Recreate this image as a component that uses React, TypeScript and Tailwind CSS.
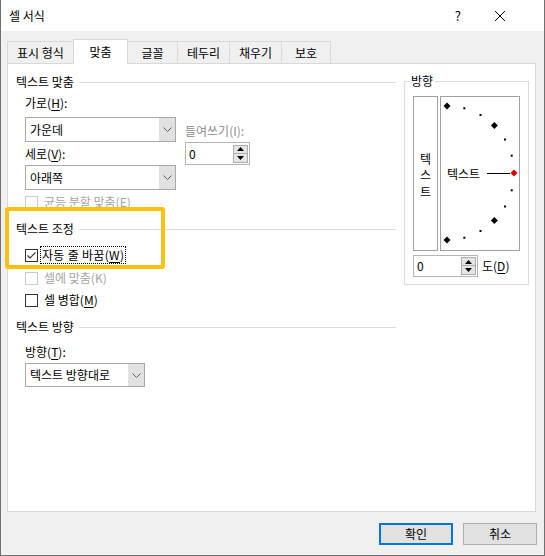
import type { ReactNode } from 'react';

function Mn({ children }: { children: ReactNode }) {
    return <span className="underline underline-offset-[2px]">{children}</span>;
}

function SectionHeader({ title }: { title: string }) {
    return (
        <div className="flex h-[16px] items-center leading-[16px]">
            <span>{title}</span>
            <div className="ml-[5px] h-px flex-1 bg-[#dcdcdc]" />
        </div>
    );
}

function CheckBox({ checked = false, disabled = false }: { checked?: boolean; disabled?: boolean }) {
    return (
        <span
            className={`flex h-[13px] w-[13px] shrink-0 items-center justify-center border bg-white ${
                disabled ? 'border-[#cccccc]' : 'border-[#333333]'
            }`}
        >
            {checked && (
                <svg width="11" height="11" viewBox="0 0 11 11">
                    <polyline points="1.5,5.5 4,8 9.5,2.5" fill="none" stroke="#333" strokeWidth="1.1" />
                </svg>
            )}
        </span>
    );
}

function Chevron() {
    return (
        <svg width="9" height="5" viewBox="0 0 9 5">
            <polyline points="0.5,0.5 4.5,4.5 8.5,0.5" fill="none" stroke="#606060" strokeWidth="1" />
        </svg>
    );
}

function Select({ value, width, height }: { value: string; width: string; height: string }) {
    return (
        <div className={`flex ${width} ${height} border border-[#a9a9a9] bg-white`}>
            <span className="flex flex-1 items-center pl-[4px]">{value}</span>
            <span className="flex w-[16px] items-center justify-center bg-[#e1e1e1]">
                <Chevron />
            </span>
        </div>
    );
}

function SpinButtons() {
    return (
        <div className="mr-[1px] flex flex-col">
            <span className="flex h-[9px] w-[15px] items-center justify-center border border-[#adadad] bg-[#e5e5e5]">
                <svg width="7" height="4" viewBox="0 0 7 4">
                    <polygon points="0,4 3.5,0 7,4" fill="#000" />
                </svg>
            </span>
            <span className="-mt-px flex h-[10px] w-[15px] items-center justify-center border border-[#adadad] bg-[#e5e5e5]">
                <svg width="7" height="4" viewBox="0 0 7 4">
                    <polygon points="0,0 3.5,4 7,0" fill="#000" />
                </svg>
            </span>
        </div>
    );
}

function Spin({ height }: { height: string }) {
    return (
        <div className={`flex w-[65px] ${height} items-center border border-[#b4b4b4] bg-white`}>
            <span className="flex-1 pl-[3px] leading-[16px]">0</span>
            <SpinButtons />
        </div>
    );
}

function Dial() {
    // dots every 15 degrees around a half circle, centre (7,77) radius 67
    const dots = [];
    for (let i = -6; i <= 6; i++) {
        const a = (i * 15 * Math.PI) / 180;
        const x = 7 + 67 * Math.cos(a);
        const y = 77 - 67 * Math.sin(a);
        if (i === 0) {
            dots.push(<polygon key={i} points={`${x},${y - 3.5} ${x + 3.5},${y} ${x},${y + 3.5} ${x - 3.5},${y}`} fill="#e00000" />);
        } else if (i % 3 === 0) {
            dots.push(<polygon key={i} points={`${x},${y - 3.5} ${x + 3.5},${y} ${x},${y + 3.5} ${x - 3.5},${y}`} fill="#000" />);
        } else {
            dots.push(<rect key={i} x={x - 1} y={y - 1} width="2" height="2" fill="#000" />);
        }
    }
    return (
        <svg className="absolute left-[-1px] top-[-1px]" width="80" height="155" viewBox="0 0 80 155">
            <line x1="47" y1="77.5" x2="70" y2="77.5" stroke="#000" strokeWidth="1" />
            {dots}
        </svg>
    );
}

export default function App() {
    const tabs = [
        { label: '표시 형식', w: 'w-[67px]' },
        { label: '맞춤', w: 'w-[55px]', active: true },
        { label: '글꼴', w: 'w-[51px]' },
        { label: '테두리', w: 'w-[53px]' },
        { label: '채우기', w: 'w-[53px]' },
        { label: '보호', w: 'w-[50px]' },
    ];

    return (
        <div className="relative flex h-[556px] w-[545px] flex-col border-x border-b border-[#707070] bg-[#f0f0f0] font-['Noto_Sans_CJK_KR',sans-serif] text-[12px] text-black">
            {/* Title bar */}
            <div className="flex h-[31px] items-center bg-white">
                <span className="ml-[8px] flex-1">셀 서식</span>
                <span className="mr-[34px] text-[13px]">?</span>
                <svg className="mr-[39px]" width="10" height="10" viewBox="0 0 10 10">
                    <path d="M0 0L10 10M10 0L0 10" stroke="#000" strokeWidth="1" />
                </svg>
            </div>

            {/* Tabs */}
            <div className="ml-[6px] mt-[8px] flex h-[24px] items-end">
                {tabs.map((t, i) => (
                    <div
                        key={t.label}
                        className={`flex items-center justify-center border-x border-t border-[#d9d9d9] ${t.w} ${
                            i > 0 ? '-ml-px' : ''
                        } ${t.active ? 'relative z-10 -mb-px h-[25px] bg-white' : 'h-[22px] bg-[#f0f0f0] pt-[1px]'}`}
                    >
                        {t.label}
                    </div>
                ))}
            </div>

            {/* Panel */}
            <div className="ml-[6px] flex h-[449px] w-[529px] border border-[#d9d9d9] bg-white">
                {/* Left column */}
                <div className="flex w-[388px] flex-col pl-[8px] leading-[16px]">
                    <div className="mt-[10px]">
                        <SectionHeader title="텍스트 맞춤" />
                    </div>
                    <div className="ml-[9px] mt-[5px] flex">
                        <div className="flex flex-col">
                            <span className="h-[16px]">
                                가로(<Mn>H</Mn>):
                            </span>
                            <div className="mt-[6px]">
                                <Select value="가운데" width="w-[151px]" height="h-[25px]" />
                            </div>
                            <span className="mt-[4px] h-[16px]">
                                세로(<Mn>V</Mn>):
                            </span>
                            <div className="mt-[3px]">
                                <Select value="아래쪽" width="w-[151px]" height="h-[25px]" />
                            </div>
                        </div>
                        <div className="ml-[9px] mt-[28px] flex flex-col">
                            <span className="h-[16px] text-[#8c8c8c]">들여쓰기(I):</span>
                            <div className="mt-[3px]">
                                <Spin height="h-[23px]" />
                            </div>
                        </div>
                    </div>
                    <div className="ml-[9px] mt-[4px] flex h-[16px] items-center gap-[6px] text-[#a6a6a6]">
                        <CheckBox disabled />
                        <span>
                            균등 분할 맞춤(<Mn>E</Mn>)
                        </span>
                    </div>

                    <div className="mt-[11px]">
                        <SectionHeader title="텍스트 조정" />
                    </div>
                    <div className="ml-[9px] mt-[9px] flex h-[18px] items-center gap-[2px]">
                        <CheckBox checked />
                        <span className="flex h-[18px] items-center border border-dotted border-black px-[1px] tracking-[0.3px]">
                            자동 줄 바꿈(<Mn>W</Mn>)
                        </span>
                    </div>
                    <div className="ml-[9px] mt-[5px] flex h-[18px] items-center gap-[6px] text-[#a6a6a6]">
                        <CheckBox disabled />
                        <span>셀에 맞춤(K)</span>
                    </div>
                    <div className="ml-[9px] mt-[4px] flex h-[18px] items-center gap-[6px]">
                        <CheckBox />
                        <span>
                            셀 병합(<Mn>M</Mn>)
                        </span>
                    </div>

                    <div className="mt-[10px]">
                        <SectionHeader title="텍스트 방향" />
                    </div>
                    <span className="ml-[9px] mt-[9px] h-[16px]">
                        방향(<Mn>T</Mn>):
                    </span>
                    <div className="ml-[9px] mt-[3px]">
                        <Select value="텍스트 방향대로" width="w-[120px]" height="h-[24px]" />
                    </div>
                </div>

                {/* Right column: orientation */}
                <div className="relative ml-[8px] mt-[17px] h-[204px] w-[125px] border border-[#dcdcdc] pl-[8px] pt-[14px]">
                    <span className="absolute left-[5px] top-[-9px] bg-white px-px leading-[16px]">방향</span>
                    <div className="flex">
                        <div className="flex h-[155px] w-[25px] flex-col items-center justify-center border border-[#a0a0a0] pt-[4px] leading-[16.5px]">
                            <span>텍</span>
                            <span>스</span>
                            <span>트</span>
                        </div>
                        <div className="relative ml-[2px] h-[155px] w-[80px] border border-[#a0a0a0]">
                            <Dial />
                            <span className="absolute left-[6px] top-[69px] leading-[16px]">텍스트</span>
                        </div>
                    </div>
                    <div className="mt-[4px] flex items-center">
                        <Spin height="h-[22px]" />
                        <span className="ml-[4px] leading-[16px]">
                            도(<Mn>D</Mn>)
                        </span>
                    </div>
                </div>
            </div>

            {/* Buttons */}
            <div className="mr-[7px] mt-[11px] flex justify-end gap-[10px]">
                <button className="flex h-[22px] w-[74px] items-center justify-center border-2 border-[#0078d7] bg-[#e1e1e1]">
                    확인
                </button>
                <button className="flex h-[22px] w-[74px] items-center justify-center border border-[#adadad] bg-[#e1e1e1]">
                    취소
                </button>
            </div>

            {/* Highlight */}
            <div className="absolute left-[4px] top-[207px] h-[62px] w-[160px] rounded-[3px] border-4 border-[#fdc20f]" />
        </div>
    );
}
